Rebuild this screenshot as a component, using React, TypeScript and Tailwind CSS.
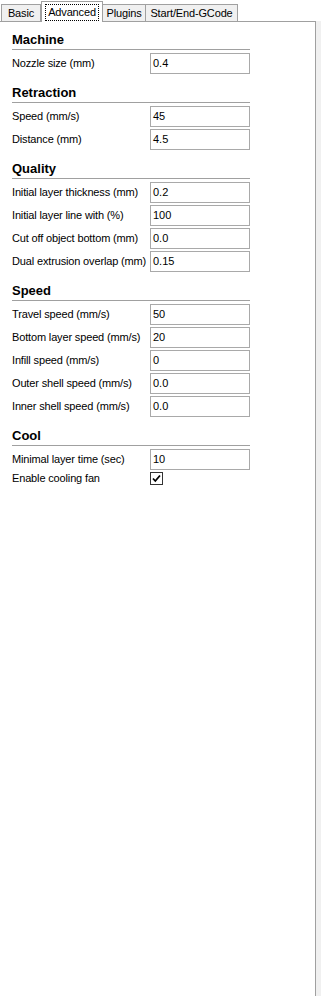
import React from "react";

type Row = { label: string; value?: string; checkbox?: boolean };
type Section = { title: string; rows: Row[] };

const sections: Section[] = [
  { title: "Machine", rows: [{ label: "Nozzle size (mm)", value: "0.4" }] },
  {
    title: "Retraction",
    rows: [
      { label: "Speed (mm/s)", value: "45" },
      { label: "Distance (mm)", value: "4.5" },
    ],
  },
  {
    title: "Quality",
    rows: [
      { label: "Initial layer thickness (mm)", value: "0.2" },
      { label: "Initial layer line with (%)", value: "100" },
      { label: "Cut off object bottom (mm)", value: "0.0" },
      { label: "Dual extrusion overlap (mm)", value: "0.15" },
    ],
  },
  {
    title: "Speed",
    rows: [
      { label: "Travel speed (mm/s)", value: "50" },
      { label: "Bottom layer speed (mm/s)", value: "20" },
      { label: "Infill speed (mm/s)", value: "0" },
      { label: "Outer shell speed (mm/s)", value: "0.0" },
      { label: "Inner shell speed (mm/s)", value: "0.0" },
    ],
  },
  {
    title: "Cool",
    rows: [
      { label: "Minimal layer time (sec)", value: "10" },
      { label: "Enable cooling fan", checkbox: true },
    ],
  },
];

const font = { fontFamily: '"Liberation Sans", Arial, sans-serif' };

export default function App() {
  return (
    <div
      className="relative w-[321px] h-[996px] bg-white text-black overflow-hidden"
      style={font}
    >
      {/* Tab strip */}
      <div className="relative h-[21px] flex items-end text-[11px] leading-none tracking-[-0.15px] z-10">
        <div className="ml-[1px] w-[40px] h-[17px] border border-b-0 border-[#a0a0a0] bg-[#f0f0f0] flex items-center justify-center">
          Basic
        </div>
        <div className="w-[62px] h-[21px] -mb-[1px] border border-b-0 border-[#a0a0a0] bg-white flex items-center justify-center">
          <span className="px-[2px] py-[2px] border border-dotted border-black">Advanced</span>
        </div>
        <div className="w-[43px] h-[17px] border border-b-0 border-l-0 border-[#a0a0a0] bg-[#f0f0f0] flex items-center justify-center">
          Plugins
        </div>
        <div className="w-[92px] h-[17px] border border-b-0 border-l-0 border-[#a0a0a0] bg-[#f0f0f0] flex items-center justify-center">
          Start/End-GCode
        </div>
      </div>

      <div className="flex h-[975px]">
        {/* Panel */}
        <div className="w-[316px] h-full border-t border-r border-[#a0a0a0] bg-white pt-[1px] pl-[12px]">
          {sections.map((s) => (
            <div key={s.title} className="w-[238px]">
              <div className="h-[27px] border-b border-[#a0a0a0] pt-[9px] text-[13px] leading-[16px] font-bold">
                {s.title}
              </div>
              <div className="mt-[3px]">
                {s.rows.map((r) => (
                  <div
                    key={r.label}
                    className={`flex items-center ${r.checkbox ? "h-[13px]" : "h-[21px] mb-[2px]"}`}
                  >
                    <div className="w-[138px] shrink-0 text-[11px] leading-[13px] tracking-[-0.15px] whitespace-nowrap">
                      {r.label}
                    </div>
                    {r.checkbox ? (
                      <div className="w-[13px] h-[13px] border border-[#333333] bg-white flex items-center justify-center">
                        <svg width="9" height="9" viewBox="0 0 9 9">
                          <path
                            d="M1 4.5 L3.3 7 L8 1.5"
                            fill="none"
                            stroke="#000"
                            strokeWidth="1.8"
                          />
                        </svg>
                      </div>
                    ) : (
                      <div className="w-[100px] h-[21px] border border-[#a9a9a9] bg-white flex items-center pl-[2px] text-[11px] leading-[13px]">
                        {r.value}
                      </div>
                    )}
                  </div>
                ))}
              </div>
            </div>
          ))}
        </div>
        <div className="flex-1 h-full bg-[#f0f0f0]" />
      </div>
    </div>
  );
}
